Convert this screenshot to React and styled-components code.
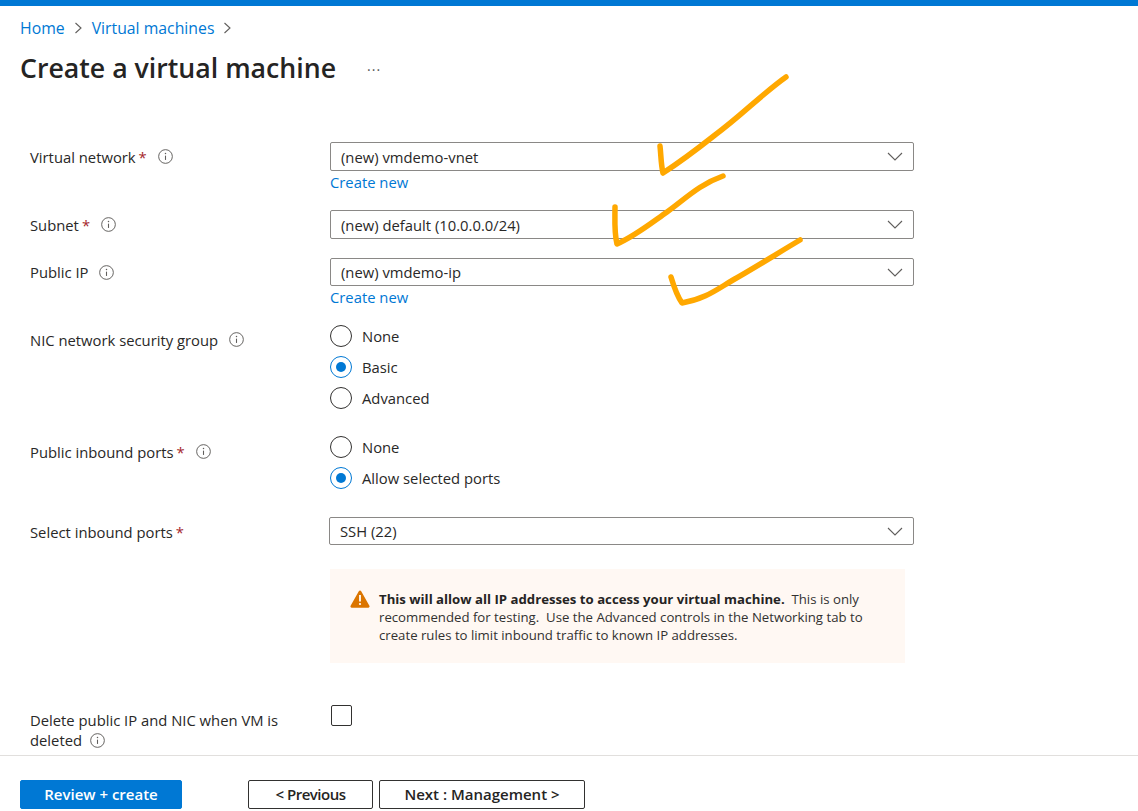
import React from 'react'
import styled, { createGlobalStyle } from 'styled-components'

const GlobalStyle = createGlobalStyle`
  html, body {
    margin: 0;
    padding: 0;
    background: #fff;
  }
  body {
    font-family: "Open Sans", "Noto Sans", sans-serif;
    font-size: 14.8px;
    color: #292827;
  }
`

const Page = styled.div`
  position: relative;
  height: 811px;
  display: flex;
  flex-direction: column;
  overflow: hidden;
  border-top: 6px solid #0078d4;
  box-sizing: border-box;
`

const Header = styled.header`
  padding: 11px 20px 0;
`

const Breadcrumb = styled.nav`
  display: flex;
  align-items: center;
  gap: 9px;
  height: 22px;
  font-size: 15.8px;
`

const Link = styled.a`
  color: #0078d4;
  text-decoration: none;
`

const TitleRow = styled.div`
  display: flex;
  align-items: center;
  margin-top: 8px;
  height: 40px;
`

const Title = styled.h1`
  margin: 0;
  font-size: 26.7px;
  font-weight: 600;
  color: #252423;
`

const More = styled.span`
  margin-left: 31px;
  margin-bottom: 4px;
  font-size: 14px;
  letter-spacing: 1px;
  color: #555;
`

const Form = styled.main`
  flex: 1;
  padding: 55px 0 0 30px;
`

const Row = styled.div`
  display: grid;
  grid-template-columns: 300px 584px;
  margin-top: ${props => props.$top || 0}px;
`

const Label = styled.div`
  display: flex;
  align-items: center;
  gap: 3px;
  height: ${props => props.$height || 29}px;
  margin-top: ${props => props.$shift || 0}px;
  line-height: 20px;
`

const LabelWrap = styled.div`
  width: 270px;
  line-height: 20px;
  margin-top: 5px;
`

const Star = styled.span`
  color: #a4262c;
`

const InfoWrap = styled.span`
  display: inline-flex;
  margin-left: 8px;
  vertical-align: -2px;
`

const Select = styled.div`
  display: flex;
  align-items: center;
  justify-content: space-between;
  box-sizing: border-box;
  height: ${props => props.$height || 29}px;
  margin-left: ${props => props.$left || 0}px;
  padding: 0 10px;
  border: 1px solid #8a8886;
  border-radius: 2px;
  background: #fff;
`

const FieldLink = styled(Link)`
  display: block;
  margin-top: 1px;
  line-height: 20px;
`

const RadioGroup = styled.div`
  display: flex;
  flex-direction: column;
  gap: 9px;
`

const RadioRow = styled.div`
  display: flex;
  align-items: center;
  gap: 10px;
  height: 22px;
`

const Radio = styled.span`
  box-sizing: border-box;
  width: 22px;
  height: 22px;
  border-radius: 50%;
  border: 1px solid ${props => props.$on ? '#0078d4' : '#323130'};
  display: flex;
  align-items: center;
  justify-content: center;

  &::after {
    content: '';
    display: ${props => props.$on ? 'block' : 'none'};
    width: 10px;
    height: 10px;
    border-radius: 50%;
    background: #0078d4;
  }
`

const Warning = styled.div`
  display: flex;
  gap: 9px;
  box-sizing: border-box;
  width: 575px;
  height: 94px;
  margin: 23px 0 0 300px;
  padding: 21px 20px 0 20px;
  background: #fff8f3;
  font-size: 13.2px;
  line-height: 18px;
`

const WarningText = styled.p`
  margin: 0;
  color: #323130;

  b {
    font-weight: 700;
    color: #252423;
  }
`

const Checkbox = styled.span`
  display: block;
  box-sizing: border-box;
  width: 21px;
  height: 21px;
  margin-left: 1px;
  border: 1px solid #323130;
  border-radius: 2px;
`

const Footer = styled.footer`
  display: flex;
  align-items: flex-start;
  height: 56px;
  box-sizing: border-box;
  padding: 24px 20px 0;
  border-top: 1px solid #e1dfdd;
`

const Button = styled.button`
  box-sizing: border-box;
  height: 29px;
  width: ${props => props.$width}px;
  margin-left: ${props => props.$left || 0}px;
  padding: 0 0 2px;
  border-radius: 2px;
  border: 1px solid ${props => props.$primary ? '#0078d4' : '#323130'};
  background: ${props => props.$primary ? '#0078d4' : '#fff'};
  color: ${props => props.$primary ? '#fff' : '#252423'};
  font-family: inherit;
  font-size: 15px;
  font-weight: 600;
  letter-spacing: ${props => props.$tight ? '-0.5px' : '0'};
`

const Strokes = styled.svg`
  position: absolute;
  top: -6px;
  left: 0;
  pointer-events: none;
`

const Info = () => (
  <InfoWrap>
    <svg width="15" height="15" viewBox="0 0 14 14" fill="none">
      <circle cx="7" cy="7" r="6.4" stroke="#605e5c" strokeWidth="0.9" />
      <path d="M7 6.2v4" stroke="#605e5c" strokeWidth="1" />
      <circle cx="7" cy="4.2" r="0.7" fill="#605e5c" />
    </svg>
  </InfoWrap>
)

const Chevron = ({ small }) => (
  <svg width={small ? 9 : 16} height={small ? 14 : 9} viewBox={small ? '0 0 9 14' : '0 0 16 9'} fill="none">
    <path d={small ? 'M1.5 2l5.5 5-5.5 5' : 'M1 1l7 7 7-7'} stroke="#605e5c" strokeWidth="1.1" />
  </svg>
)

const Field = ({ value, height, left }) => (
  <Select $height={height} $left={left}>
    <span>{value}</span>
    <Chevron />
  </Select>
)

const RadioOption = ({ label, on }) => (
  <RadioRow>
    <Radio $on={on} />
    <span>{label}</span>
  </RadioRow>
)

export default function App() {
  return (
    <Page>
      <GlobalStyle />
      <Header>
        <Breadcrumb>
          <Link>Home</Link>
          <Chevron small />
          <Link>Virtual machines</Link>
          <Chevron small />
        </Breadcrumb>
        <TitleRow>
          <Title>Create a virtual machine</Title>
          <More>...</More>
        </TitleRow>
      </Header>

      <Form>
        <Row>
          <Label>Virtual network <Star>*</Star><Info /></Label>
          <div>
            <Field value="(new) vmdemo-vnet" />
            <FieldLink>Create new</FieldLink>
          </div>
        </Row>
        <Row $top={18}>
          <Label>Subnet <Star>*</Star><Info /></Label>
          <Field value="(new) default (10.0.0.0/24)" />
        </Row>
        <Row $top={19}>
          <Label $height={28}>Public IP<Info /></Label>
          <div>
            <Field value="(new) vmdemo-ip" height={28} />
            <FieldLink>Create new</FieldLink>
          </div>
        </Row>
        <Row $top={18}>
          <Label>NIC network security group<Info /></Label>
          <RadioGroup>
            <RadioOption label="None" />
            <RadioOption label="Basic" on />
            <RadioOption label="Advanced" />
          </RadioGroup>
        </Row>
        <Row $top={27}>
          <Label $shift={1}>Public inbound ports <Star>*</Star><Info /></Label>
          <RadioGroup>
            <RadioOption label="None" />
            <RadioOption label="Allow selected ports" on />
          </RadioGroup>
        </Row>
        <Row $top={28}>
          <Label $height={29}>Select inbound ports <Star>*</Star></Label>
          <Field value="SSH (22)" height={28} left={-1} />
        </Row>
        <Warning>
          <svg width="20" height="18" viewBox="0 0 20 18" style={{ flexShrink: 0 }}>
            <path d="M10 0.5c.5 0 .9.2 1.2.7l8.2 14.6c.5.9-.1 1.9-1.1 1.9H1.7c-1 0-1.6-1-1.1-1.9L8.8 1.2c.3-.5.7-.7 1.2-.7z" fill="#db7500" />
            <path d="M10 5v6.5" stroke="#fff" strokeWidth="1.8" />
            <circle cx="10" cy="14" r="1.1" fill="#fff" />
          </svg>
          <WarningText>
            <b>This will allow all IP addresses to access your virtual machine.</b>&nbsp; This is only recommended for testing.&nbsp; Use the Advanced controls in the Networking tab to create rules to limit inbound traffic to known IP addresses.
          </WarningText>
        </Warning>
        <Row $top={42}>
          <LabelWrap>Delete public IP and NIC when VM is deleted<Info /></LabelWrap>
          <Checkbox />
        </Row>
      </Form>

      <Footer>
        <Button $primary $width={162}>Review + create</Button>
        <Button $tight $width={125} $left={66}>&lt; Previous</Button>
        <Button $width={206} $left={6}>Next : Management &gt;</Button>
      </Footer>

      <Strokes width="1138" height="811" fill="none" stroke="#ffa800" strokeWidth="5.5" strokeLinecap="round" strokeLinejoin="round">
        <path d="M786 77C762 94 742 115 715 135C696 150 680 162 663 173C661 165 661 155 660 146" />
        <path d="M723 176C700 184 685 199 667 212C650 224 635 236 617 244C614 232 615 220 615 207" />
        <path d="M800 240C778 253 756 267 733 280C716 290 705 299 682 303C677 296 674 287 671 277" />
      </Strokes>
    </Page>
  )
}
